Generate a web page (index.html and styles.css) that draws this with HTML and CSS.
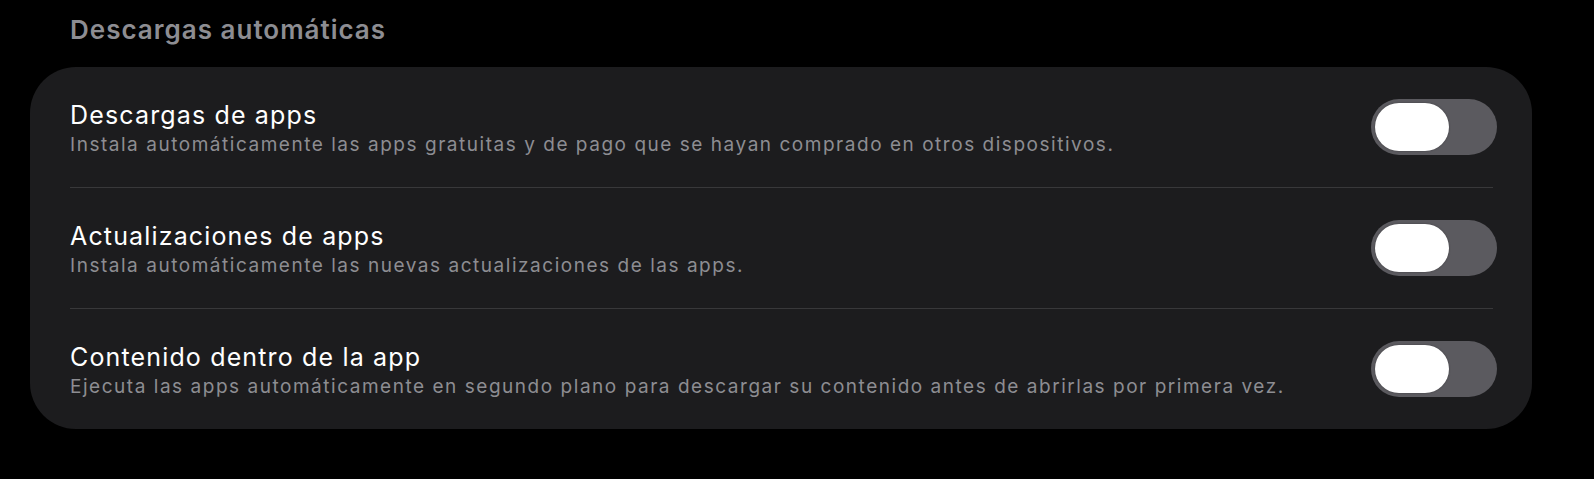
FILE: index.html
```html
<!DOCTYPE html>
<html lang="es">
<head>
  <meta charset="UTF-8">
  <meta name="viewport" content="width=device-width, initial-scale=1.0">
  <title>Descargas automáticas</title>
  <link rel="stylesheet" href="styles.css">
</head>
<body>
  <div class="section">
    <h2 class="section-title">Descargas automáticas</h2>
    <div class="card">
      <div class="row">
        <div class="text">
          <div class="title">Descargas de apps</div>
          <div class="subtitle">Instala automáticamente las apps gratuitas y de pago que se hayan comprado en otros dispositivos.</div>
        </div>
        <div class="toggle"><span class="knob"></span></div>
      </div>
      <div class="row">
        <div class="text">
          <div class="title">Actualizaciones de apps</div>
          <div class="subtitle">Instala automáticamente las nuevas actualizaciones de las apps.</div>
        </div>
        <div class="toggle"><span class="knob"></span></div>
      </div>
      <div class="row">
        <div class="text">
          <div class="title">Contenido dentro de la app</div>
          <div class="subtitle">Ejecuta las apps automáticamente en segundo plano para descargar su contenido antes de abrirlas por primera vez.</div>
        </div>
        <div class="toggle"><span class="knob"></span></div>
      </div>
    </div>
  </div>
</body>
</html>
```
FILE: styles.css
```css
body {
  background-color: #000;
  margin: 0;
  font-family: Inter, "Noto Sans", sans-serif;
  color: #fff;
}

.section {
  padding: 14px 0 0 30px;
  width: 1502px;
}

.section-title {
  margin: 0 0 21px 40px;
  font-size: 26px;
  line-height: 32px;
  font-weight: 600;
  letter-spacing: 1px;
  color: #8d8d92;
}

.card {
  background-color: #1c1c1e;
  border-radius: 46px;
  padding: 0 35px 0 40px;
}

.row {
  display: flex;
  align-items: center;
  justify-content: space-between;
  height: 120px;
  margin-right: 4px;
  border-bottom: 1px solid #38383a;
}

.row:last-child {
  border-bottom: none;
}

.text {
  padding-top: 2px;
}

.title {
  font-size: 25px;
  line-height: 30px;
  letter-spacing: 1.15px;
  color: #fff;
}

.subtitle {
  margin-top: 3px;
  font-size: 19px;
  line-height: 24px;
  color: #8d8d92;
  letter-spacing: 1.53px;
}

.toggle {
  width: 126px;
  height: 56px;
  margin-right: -4px;
  border-radius: 28px;
  background-color: #5b5a5f;
  padding: 4px;
  box-sizing: border-box;
}

.knob {
  display: block;
  width: 74px;
  height: 48px;
  border-radius: 24px;
  background-color: #fff;
  box-shadow: 0 0 2px rgba(0, 0, 0, 0.35);
}
```
